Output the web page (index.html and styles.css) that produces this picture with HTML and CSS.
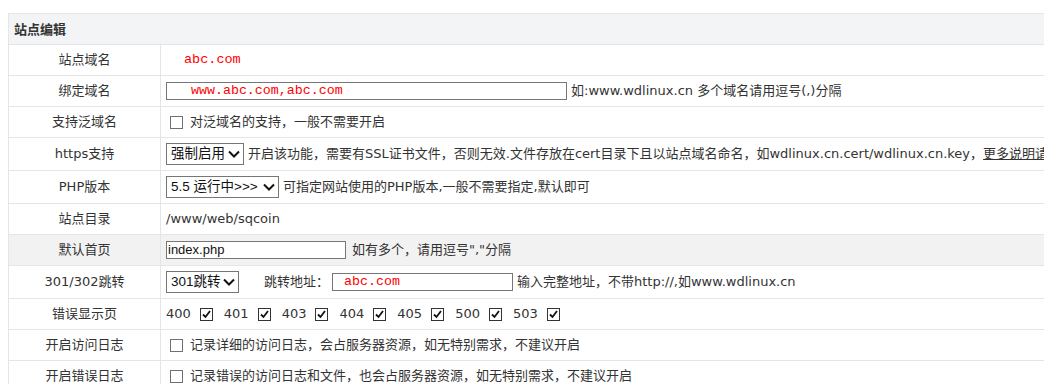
FILE: index.html
```html
<!DOCTYPE html>
<html lang="zh-CN">
<head>
    <meta charset="UTF-8">
    <title>站点编辑</title>
    <link rel="stylesheet" href="styles.css">
</head>
<body>
    <table class="site-form">
        <colgroup>
            <col class="col-label">
            <col>
        </colgroup>
        <tr class="head">
            <th colspan="2">站点编辑</th>
        </tr>
        <tr>
            <td class="label">站点域名</td>
            <td><div class="line"><span class="domain">abc.com</span></div></td>
        </tr>
        <tr>
            <td class="label">绑定域名</td>
            <td>
                <div class="line">
                    <div class="text-input bind"><span class="red-text">www.abc.com,abc.com</span></div>
                    <span class="hint">如:www.wdlinux.cn 多个域名请用逗号(,)分隔</span>
                </div>
            </td>
        </tr>
        <tr>
            <td class="label">支持泛域名</td>
            <td>
                <div class="line">
                    <span class="cb lead"></span>
                    <span class="cb-text">对泛域名的支持，一般不需要开启</span>
                </div>
            </td>
        </tr>
        <tr>
            <td class="label">https支持</td>
            <td>
                <div class="line">
                    <span class="select https"><span>强制启用</span><svg width="12" height="8" viewBox="0 0 12 8"><polyline points="1,1.5 6,6.5 11,1.5" fill="none" stroke="#111" stroke-width="2"/></svg></span>
                    <span class="hint">开启该功能，需要有SSL证书文件，否则无效.文件存放在cert目录下且以站点域名命名，如wdlinux.cn.cert/wdlinux.cn.key，<a href="#">更多说明请</a></span>
                </div>
            </td>
        </tr>
        <tr>
            <td class="label">PHP版本</td>
            <td>
                <div class="line">
                    <span class="select php"><span>5.5 运行中&gt;&gt;&gt;</span><svg width="12" height="8" viewBox="0 0 12 8"><polyline points="1,1.5 6,6.5 11,1.5" fill="none" stroke="#111" stroke-width="2"/></svg></span>
                    <span class="hint">可指定网站使用的PHP版本,一般不需要指定,默认即可</span>
                </div>
            </td>
        </tr>
        <tr>
            <td class="label">站点目录</td>
            <td><div class="line">/www/web/sqcoin</div></td>
        </tr>
        <tr class="hl">
            <td class="label">默认首页</td>
            <td>
                <div class="line">
                    <div class="text-input index">index.php</div>
                    <span class="hint wide">如有多个，请用逗号","分隔</span>
                </div>
            </td>
        </tr>
        <tr>
            <td class="label">301/302跳转</td>
            <td>
                <div class="line">
                    <span class="select jump"><span>301跳转</span><svg width="12" height="8" viewBox="0 0 12 8"><polyline points="1,1.5 6,6.5 11,1.5" fill="none" stroke="#111" stroke-width="2"/></svg></span>
                    <span class="jump-label">跳转地址：</span>
                    <div class="text-input jump-url"><span class="red-text">abc.com</span></div>
                    <span class="hint">输入完整地址，不带http://,如www.wdlinux.cn</span>
                </div>
            </td>
        </tr>
        <tr>
            <td class="label">错误显示页</td>
            <td>
                <div class="line codes">
                    <span class="code">400</span><span class="cb on"><svg width="11" height="11" viewBox="0 0 11 11"><polyline points="2,5.5 4.5,8 9,2" fill="none" stroke="#111" stroke-width="1.8"/></svg></span>
                    <span class="code">401</span><span class="cb on"><svg width="11" height="11" viewBox="0 0 11 11"><polyline points="2,5.5 4.5,8 9,2" fill="none" stroke="#111" stroke-width="1.8"/></svg></span>
                    <span class="code">403</span><span class="cb on"><svg width="11" height="11" viewBox="0 0 11 11"><polyline points="2,5.5 4.5,8 9,2" fill="none" stroke="#111" stroke-width="1.8"/></svg></span>
                    <span class="code">404</span><span class="cb on"><svg width="11" height="11" viewBox="0 0 11 11"><polyline points="2,5.5 4.5,8 9,2" fill="none" stroke="#111" stroke-width="1.8"/></svg></span>
                    <span class="code">405</span><span class="cb on"><svg width="11" height="11" viewBox="0 0 11 11"><polyline points="2,5.5 4.5,8 9,2" fill="none" stroke="#111" stroke-width="1.8"/></svg></span>
                    <span class="code">500</span><span class="cb on"><svg width="11" height="11" viewBox="0 0 11 11"><polyline points="2,5.5 4.5,8 9,2" fill="none" stroke="#111" stroke-width="1.8"/></svg></span>
                    <span class="code">503</span><span class="cb on"><svg width="11" height="11" viewBox="0 0 11 11"><polyline points="2,5.5 4.5,8 9,2" fill="none" stroke="#111" stroke-width="1.8"/></svg></span>
                </div>
            </td>
        </tr>
        <tr>
            <td class="label">开启访问日志</td>
            <td>
                <div class="line">
                    <span class="cb lead"></span>
                    <span class="cb-text">记录详细的访问日志，会占服务器资源，如无特别需求，不建议开启</span>
                </div>
            </td>
        </tr>
        <tr>
            <td class="label">开启错误日志</td>
            <td>
                <div class="line">
                    <span class="cb lead"></span>
                    <span class="cb-text">记录错误的访问日志和文件，也会占服务器资源，如无特别需求，不建议开启</span>
                </div>
            </td>
        </tr>
    </table>
</body>
</html>
```

FILE: styles.css
```css
/* site edit form */
html, body {
    overflow: hidden;
}

body {
    margin: 8px;
    padding: 5px 0 0 0;
    font-family: "DejaVu Sans", "Noto Sans CJK SC", sans-serif;
    font-size: 13px;
    color: #333;
    background-color: #fff;
}

.site-form {
    border-collapse: collapse;
    table-layout: fixed;
    width: 1300px;
}

.site-form .col-label {
    width: 152px;
}

.site-form th,
.site-form td {
    border: 1px solid #e3e6e9;
    padding: 5px 5px;
    line-height: 20px;
    vertical-align: middle;
    white-space: nowrap;
}

.site-form .head th {
    background-color: #f3f4f5;
    text-align: left;
    font-family: "Noto Sans CJK SC", sans-serif;
    font-weight: bold;
}

.site-form .label {
    text-align: center;
}

.site-form .hl td {
    background-color: #f2f2f2;
}

.line {
    display: flex;
    align-items: center;
    min-height: 20px;
}

.domain {
    margin-left: 18px;
    color: #f00;
    font-family: "Liberation Mono", monospace;
    font-size: 13.5px;
}

.red-text {
    color: #f00;
    font-family: "Liberation Mono", monospace;
    font-size: 13.3px;
}

.text-input {
    box-sizing: border-box;
    height: 18px;
    border: 1px solid #767676;
    background-color: #fff;
    display: flex;
    align-items: center;
    font-family: "Liberation Sans", "Noto Sans CJK SC", sans-serif;
    font-size: 13px;
    color: #111;
}

.text-input.bind {
    width: 401px;
    padding-left: 24px;
}

.text-input.index {
    width: 180px;
    padding-left: 1px;
}

.text-input.jump-url {
    width: 181px;
    padding-left: 11px;
}

.hint {
    margin-left: 4px;
}

.hint.wide {
    margin-left: 6px;
}

.hint a {
    color: #333;
    text-decoration: underline;
}

.select {
    box-sizing: border-box;
    height: 22px;
    border: 1px solid #767676;
    background-color: #fff;
    display: inline-flex;
    align-items: center;
    justify-content: space-between;
    padding: 0 3px 0 4px;
    font-family: "Liberation Sans", "Noto Sans CJK SC", sans-serif;
    font-size: 13.5px;
    color: #111;
}

.select.https {
    width: 78px;
}

.select.php {
    width: 113px;
}

.select.jump {
    width: 73px;
}

.jump-label {
    margin-left: 25px;
    margin-right: 3px;
}

.cb {
    box-sizing: border-box;
    display: inline-flex;
    align-items: center;
    justify-content: center;
    width: 13px;
    height: 13px;
    border: 1px solid #707070;
    background-color: #fff;
}

.cb.lead {
    margin-left: 4px;
}

.cb-text {
    margin-left: 7px;
}

.cb.on {
    border-color: #333;
}

.codes .code {
    margin-right: 9px;
}

.codes .cb {
    margin-right: 11px;
}
```
